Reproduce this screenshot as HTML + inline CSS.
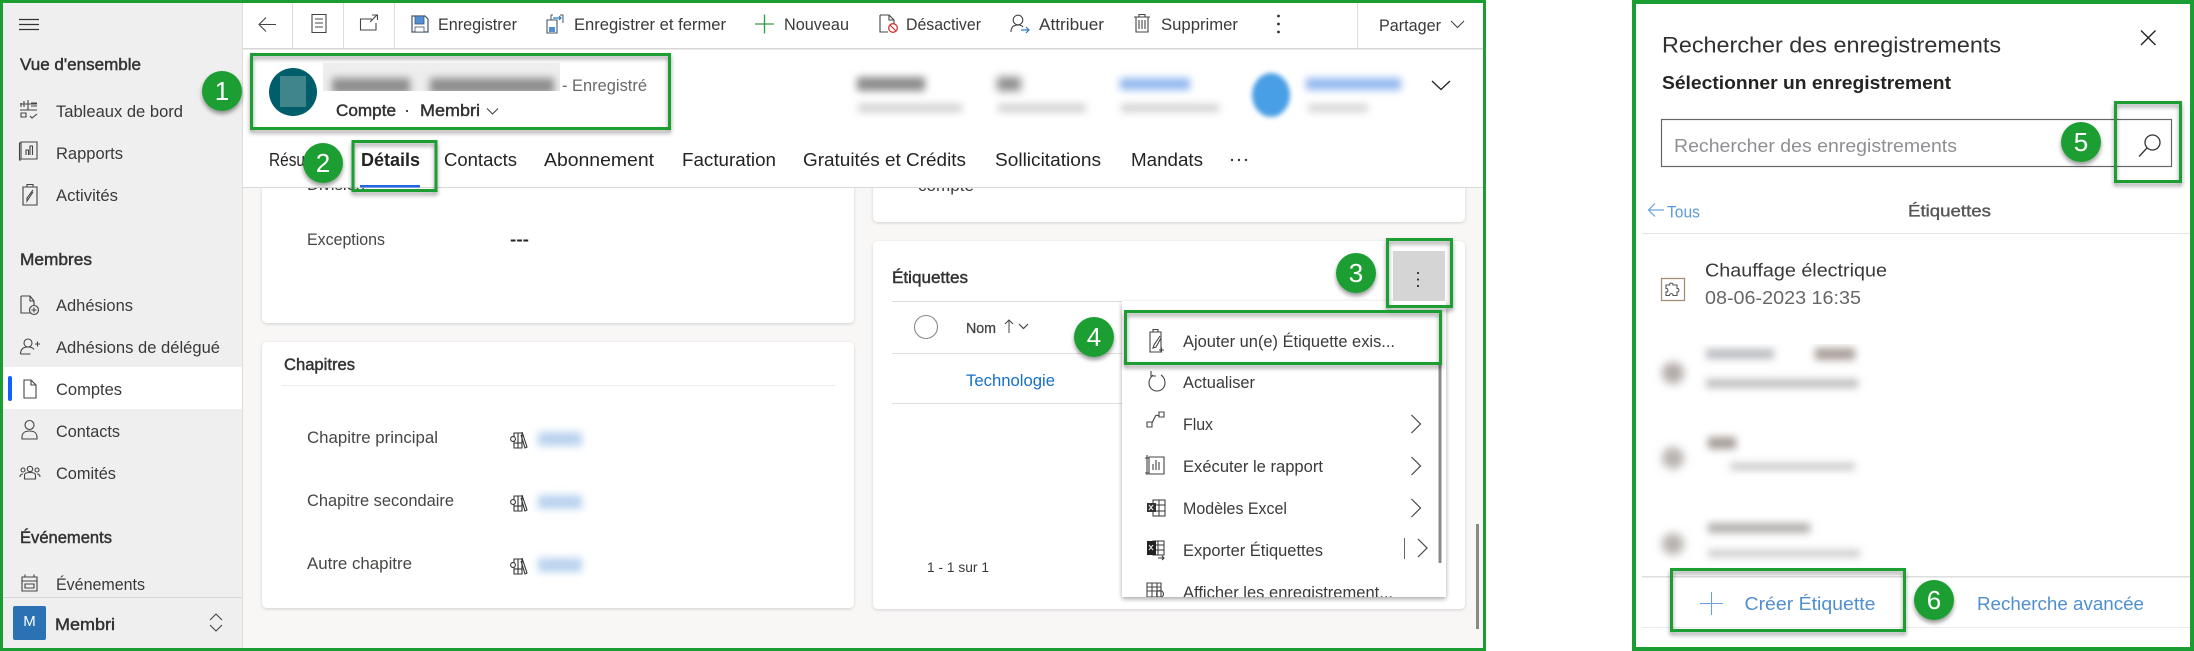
<!DOCTYPE html>
<html lang="fr"><head><meta charset="utf-8"><title>Étiquettes</title>
<style>
html,body{margin:0;padding:0;background:#fff;width:2194px;height:651px;overflow:hidden}
svg{display:block}
text{font-family:"Liberation Sans",sans-serif;fill:#3b3a39;font-size:16.5px}
.s{font-size:17px}
.b{font-weight:400;fill:#333;stroke:#333;stroke-width:.45px}
.bb{font-weight:700;fill:#252423}
.n{font-size:26px;fill:#fff;text-anchor:middle}
.t{font-size:18px;fill:#252423}
.m{font-size:17px;fill:#3b3a39}
.i{fill:none;stroke:#444;stroke-width:1.1}
.g{fill:none;stroke:#1b9e31;stroke-width:3;filter:url(#sh)}
.c{fill:#1b9e31;filter:url(#sh)}
.card{fill:#fff;filter:url(#cs)}
</style></head><body>
<svg width="2194" height="651" viewBox="0 0 2194 651" xmlns="http://www.w3.org/2000/svg">
<defs>
<filter id="sh" x="-20%" y="-20%" width="140%" height="150%"><feDropShadow dx="0" dy="3" stdDeviation="2" flood-color="#000" flood-opacity=".4"/></filter>
<filter id="cs" x="-5%" y="-5%" width="110%" height="110%"><feDropShadow dx="0" dy="1" stdDeviation="1.5" flood-color="#000" flood-opacity=".16"/></filter>
<filter id="ms" x="-5%" y="-5%" width="110%" height="110%"><feDropShadow dx="0" dy="2" stdDeviation="2.5" flood-color="#000" flood-opacity=".35"/></filter>
<filter id="b2" x="-50%" y="-50%" width="200%" height="200%"><feGaussianBlur stdDeviation="2.5"/></filter>
<filter id="b3" x="-60%" y="-300%" width="220%" height="700%"><feGaussianBlur stdDeviation="4"/></filter>
<filter id="b4" x="-100%" y="-100%" width="300%" height="300%"><feGaussianBlur stdDeviation="4.5"/></filter>
<clipPath id="mc"><rect x="1122" y="301" width="324" height="296"/></clipPath>
<clipPath id="hc"><rect x="323" y="63" width="237" height="28"/></clipPath>
<clipPath id="rc"><rect x="1640" y="344" width="250" height="223"/></clipPath>
<g id="lib" fill="none" stroke="#333" stroke-width="1.1"><path d="M4 3v15h4V3zM8 3h4v15H8zM12 2l5 15-2 1-4-13"/><circle cx="3" cy="9" r="2.4" fill="#fff"/><path d="M4 13h8"/></g>
<path id="rch" d="M0 0l9 9-9 9" fill="none" stroke="#444" stroke-width="1.2"/>
</defs>

<rect width="2194" height="651" fill="#fff"/>
<rect x="243" y="49" width="1241" height="600" fill="#f8f7f6"/>

<!-- cards -->
<rect class="card" x="262" y="170" width="592" height="153" rx="5"/>
<rect class="card" x="262" y="342" width="592" height="266" rx="5"/>
<rect class="card" x="873" y="170" width="592" height="52" rx="5"/>
<rect class="card" x="873" y="241" width="592" height="368" rx="5"/>

<text x="307" y="190" textLength="58" lengthAdjust="spacingAndGlyphs" class="s">Division</text>
<text x="510" y="190" class="bb" textLength="19" lengthAdjust="spacingAndGlyphs">---</text>
<text x="918" y="191" textLength="56" lengthAdjust="spacingAndGlyphs" class="s">compte</text>
<text x="307" y="245" textLength="78" lengthAdjust="spacingAndGlyphs" class="s" style="fill:#484644">Exceptions</text>
<text x="510" y="245" class="bb" textLength="19" lengthAdjust="spacingAndGlyphs">---</text>

<text x="284" y="370" class="b" textLength="71" lengthAdjust="spacingAndGlyphs">Chapitres</text>
<rect x="281" y="385" width="555" height="1" fill="#ececec"/>
<text x="307" y="443" textLength="131" lengthAdjust="spacingAndGlyphs" class="s" style="fill:#484644">Chapitre principal</text>
<text x="307" y="506" textLength="147" lengthAdjust="spacingAndGlyphs" class="s" style="fill:#484644">Chapitre secondaire</text>
<text x="307" y="569" textLength="105" lengthAdjust="spacingAndGlyphs" class="s" style="fill:#484644">Autre chapitre</text>
<use href="#lib" x="510" y="430"/><use href="#lib" x="510" y="493"/><use href="#lib" x="510" y="556"/>
<rect x="538" y="432" width="44" height="14" fill="#b9d3ef" filter="url(#b3)"/>
<rect x="538" y="495" width="44" height="14" fill="#b9d3ef" filter="url(#b3)"/>
<rect x="538" y="558" width="44" height="14" fill="#b9d3ef" filter="url(#b3)"/>

<text x="892" y="283" class="b" textLength="76" lengthAdjust="spacingAndGlyphs">Étiquettes</text>
<rect x="892" y="301" width="232" height="1" fill="#dcdcdc"/>
<circle cx="926" cy="327" r="11.5" fill="none" stroke="#8a8886" stroke-width="1.1"/>
<text x="966" y="333" textLength="30" lengthAdjust="spacingAndGlyphs" style="font-size:15px;fill:#444;stroke:#444;stroke-width:.3px">Nom</text>
<path d="M1009 333v-13M1005 324l4-4 4 4" fill="none" stroke="#444" stroke-width="1"/>
<path d="M1019 324l4.500 4.500 4.500-4.500" fill="none" stroke="#444" stroke-width="1.2"/>
<rect x="892" y="353" width="232" height="1" fill="#e1e1e1"/>
<text x="966" y="386" textLength="89" lengthAdjust="spacingAndGlyphs" class="s" style="fill:#1470c8">Technologie</text>
<rect x="892" y="403" width="232" height="1" fill="#e1e1e1"/>
<text x="927" y="572" textLength="62" lengthAdjust="spacingAndGlyphs" style="font-size:14px">1 - 1 sur 1</text>

<!-- header -->
<rect x="243" y="49" width="1241" height="138" fill="#fff"/>
<rect x="243" y="187" width="1241" height="1" fill="#d8d8d8"/>
<rect x="243" y="3" width="1241" height="45" fill="#fff"/>
<rect x="243" y="48" width="1241" height="1.5" fill="#d6d6d6"/>
<rect x="292" y="3" width="1" height="45" fill="#dcdcdc"/>
<rect x="343" y="3" width="1" height="45" fill="#dcdcdc"/>
<rect x="394" y="3" width="1" height="45" fill="#dcdcdc"/>
<rect x="1357" y="3" width="1" height="45" fill="#dcdcdc"/>

<!-- toolbar icons -->
<path class="i" d="M276 24.500h-16M266 17.500l-7 7 7 7" stroke-width="1.2"/>
<path class="i" d="M312 14.500h14v18h-14zM315 19h8M315 23h8M315 27h8"/>
<path class="i" d="M372 19h-11.500v11h15.500v-7M370 22l7-7M372 15h5.500v5"/>
<path d="M412 16h13l3 3v13h-16z" fill="#fff" stroke="#44546a" stroke-width="1.2"/>
<rect x="415" y="16" width="9" height="8" fill="#4f90d6" stroke="#44546a" stroke-width=".8"/>
<rect x="415" y="27" width="9" height="5" fill="#fff" stroke="#44546a" stroke-width=".8"/>
<path d="M547 20h10v13h-10z" fill="#fff" stroke="#44546a" stroke-width="1.1"/><rect x="549" y="27" width="6" height="5" fill="#4f90d6"/><path d="M553 15h-2v5M560 15h3v8" fill="none" stroke="#44546a"/><path d="M553 18h8M559 16l2 2-2 2" fill="none" stroke="#2f78c4" stroke-width="1.2"/>
<path d="M755 24h19M764.500 14.500v19" stroke="#2a9d3f" stroke-width="1.300" fill="none"/>
<path class="i" d="M880 15h9l5 5v4M880 15v17h8M889 15v5h5"/><circle cx="893" cy="28" r="4.300" fill="#fff" stroke="#d13438" stroke-width="1.300"/><path d="M890 25l6 6" stroke="#d13438" stroke-width="1.200"/>
<circle cx="1018" cy="20" r="4.800" class="i"/><path class="i" d="M1011 32c0-5 3-7 7-7 2 0 4 .6 5 2"/><path d="M1021 30h8M1026 27l3 3-3 3" fill="none" stroke="#2f78c4" stroke-width="1.200"/>
<path class="i" d="M1134 17h16M1139 17v-2.500h6v2.500M1136 17v15h12V17M1139 20v9M1142 20v9M1145 20v9"/>
<circle cx="1278.500" cy="16" r="1.400" fill="#333"/><circle cx="1278.500" cy="24" r="1.400" fill="#333"/><circle cx="1278.500" cy="32" r="1.400" fill="#333"/>
<path class="i" d="M1451 21l6.500 6.500 6.500-6.500"/>

<text x="438" y="30" textLength="79" lengthAdjust="spacingAndGlyphs">Enregistrer</text>
<text x="574" y="30" textLength="152" lengthAdjust="spacingAndGlyphs">Enregistrer et fermer</text>
<text x="784" y="30" textLength="65" lengthAdjust="spacingAndGlyphs">Nouveau</text>
<text x="906" y="30" textLength="75" lengthAdjust="spacingAndGlyphs">Désactiver</text>
<text x="1039" y="30" textLength="65" lengthAdjust="spacingAndGlyphs">Attribuer</text>
<text x="1161" y="30" textLength="77" lengthAdjust="spacingAndGlyphs">Supprimer</text>
<text x="1379" y="31" textLength="62" lengthAdjust="spacingAndGlyphs">Partager</text>

<!-- record header -->
<circle cx="293" cy="92" r="24" fill="#005e6b"/>
<rect x="280" y="76" width="26" height="31" fill="#3f858b"/>
<rect x="323" y="63" width="237" height="28" fill="#eeeeee"/>
<g clip-path="url(#hc)"><rect x="332" y="78" width="78" height="16" fill="#8e8e8e" filter="url(#b3)"/><rect x="430" y="78" width="124" height="16" fill="#8e8e8e" filter="url(#b3)"/></g>
<text x="562" y="91" textLength="85" lengthAdjust="spacingAndGlyphs" style="fill:#69696a">- Enregistré</text>
<text x="336" y="116" class="b" textLength="60" lengthAdjust="spacingAndGlyphs">Compte</text>
<circle cx="407" cy="111" r="1.100" fill="#333"/>
<text x="420" y="116" class="b" textLength="60" lengthAdjust="spacingAndGlyphs">Membri</text>
<path class="i" d="M487 108.500l5.500 5.500 5.500-5.500"/>

<!-- blurred header fields -->
<rect x="857" y="77" width="68" height="14" fill="#8c8c8c" filter="url(#b3)"/>
<rect x="858" y="104" width="104" height="8" fill="#cfcfcf" filter="url(#b3)"/>
<rect x="997" y="77" width="24" height="14" fill="#8c8c8c" filter="url(#b4)"/>
<rect x="998" y="104" width="88" height="8" fill="#cfcfcf" filter="url(#b3)"/>
<rect x="1120" y="78" width="70" height="12" fill="#93b8ef" filter="url(#b3)"/>
<rect x="1121" y="104" width="98" height="8" fill="#d0d0d0" filter="url(#b3)"/>
<ellipse cx="1271" cy="95" rx="19" ry="22" fill="#4a9fe5" filter="url(#b2)"/>
<rect x="1306" y="78" width="95" height="12" fill="#93b8ef" filter="url(#b3)"/>
<rect x="1308" y="104" width="60" height="8" fill="#d4d4d4" filter="url(#b3)"/>
<path d="M1432 81l9 8.500 9-8.500" fill="none" stroke="#222" stroke-width="1.300"/>

<!-- tabs -->
<text x="269" y="166" class="t" textLength="36" lengthAdjust="spacingAndGlyphs">Résu</text>
<text x="361" y="166" class="t" textLength="59" lengthAdjust="spacingAndGlyphs" style="font-weight:700">Détails</text>
<rect x="360" y="185" width="60" height="2.500" fill="#2266e3"/>
<text x="444" y="166" class="t" textLength="73" lengthAdjust="spacingAndGlyphs">Contacts</text>
<text x="544" y="166" class="t" textLength="110" lengthAdjust="spacingAndGlyphs">Abonnement</text>
<text x="682" y="166" class="t" textLength="94" lengthAdjust="spacingAndGlyphs">Facturation</text>
<text x="803" y="166" class="t" textLength="163" lengthAdjust="spacingAndGlyphs">Gratuités et Crédits</text>
<text x="995" y="166" class="t" textLength="106" lengthAdjust="spacingAndGlyphs">Sollicitations</text>
<text x="1131" y="166" class="t" textLength="72" lengthAdjust="spacingAndGlyphs">Mandats</text>
<circle cx="1232" cy="160" r="1.200" fill="#333"/><circle cx="1239" cy="160" r="1.200" fill="#333"/><circle cx="1246" cy="160" r="1.200" fill="#333"/>

<!-- page scrollbar -->
<rect x="1476" y="524" width="3" height="105" fill="#8a8a8a"/>

<!-- sidebar -->
<rect x="3" y="3" width="240" height="645" fill="#efefef"/>
<rect x="242" y="3" width="1" height="645" fill="#dcdcdc"/>
<path d="M19 19.500h20M19 24.500h20M19 29.500h20" stroke="#333" stroke-width="1.200" fill="none"/>
<text x="20" y="70" class="b" textLength="121" lengthAdjust="spacingAndGlyphs">Vue d'ensemble</text>
<text x="56" y="117" class="s" textLength="127" lengthAdjust="spacingAndGlyphs">Tableaux de bord</text>
<text x="56" y="159" class="s" textLength="67" lengthAdjust="spacingAndGlyphs">Rapports</text>
<text x="56" y="201" class="s" textLength="62" lengthAdjust="spacingAndGlyphs">Activités</text>
<text x="20" y="265" class="b" textLength="72" lengthAdjust="spacingAndGlyphs">Membres</text>
<text x="56" y="311" class="s" textLength="77" lengthAdjust="spacingAndGlyphs">Adhésions</text>
<text x="56" y="353" class="s" textLength="164" lengthAdjust="spacingAndGlyphs">Adhésions de délégué</text>
<rect x="3" y="367" width="239" height="42" fill="#fff"/>
<rect x="8" y="376" width="4" height="25" rx="2" fill="#0f62fe"/>
<text x="56" y="395" class="s" textLength="66" lengthAdjust="spacingAndGlyphs">Comptes</text>
<text x="56" y="437" class="s" textLength="64" lengthAdjust="spacingAndGlyphs">Contacts</text>
<text x="56" y="479" class="s" textLength="60" lengthAdjust="spacingAndGlyphs">Comités</text>
<text x="20" y="543" class="b" textLength="92" lengthAdjust="spacingAndGlyphs">Événements</text>
<text x="56" y="590" class="s" textLength="89" lengthAdjust="spacingAndGlyphs">Événements</text>
<!-- sidebar icons -->
<path class="i" d="M20 104h17M20 110h17M28 100v10M21 107v-4M24 107v-6M31 103h6M31 106h6M21 113h5v4h-5zM30 116l2 2 5-4"/>
<path class="i" d="M21 143h-1.500v17H21M21 142h16v17H21zM26 155v-5h2.500v5M30 155v-9h2.500v9"/>
<path class="i" d="M23 187h14v18H23zM27 187v-2.500h6v2.500M33 192l-6 9v-3l6-8"/>
<path class="i" d="M21 296h9l4 5v4M21 296v17h9M30 296v5h4"/><circle class="i" cx="34" cy="310" r="4.500"/><path class="i" d="M34 307.500v5M31.500 310h5"/>
<circle class="i" cx="28" cy="343" r="4"/><path class="i" d="M20.500 354c0-5 3-7 7.500-7 3 0 5 1 6 2.500M20.500 354h10M35 344h5M37.500 341.500v5"/>
<path class="i" d="M24 380h7l5 5v13H24zM31 380v5h5"/>
<circle class="i" cx="29.500" cy="425" r="4.500"/><path class="i" d="M22 439v-2c0-4 3-6 7.500-6s7.500 2 7.500 6v2z"/>
<circle class="i" cx="30" cy="469" r="2.700"/><circle class="i" cx="23" cy="470" r="2"/><circle class="i" cx="37" cy="470" r="2"/><path class="i" d="M24.500 479v-4c0-1.500 2-2.500 5.500-2.500s5.500 1 5.500 2.500v4zM20 477c0-2 1-3 3-3M40 477c0-2-1-3-3-3"/>
<path class="i" d="M22 577h15v14H22zM22 581h15M25 574.500v3M34 574.500v3M25 584h9v4h-9z"/>
<rect x="3" y="597" width="239" height="1" fill="#d6d6d6"/>
<rect x="13" y="606" width="33" height="34" rx="2" fill="#2b72b4"/>
<text x="29.500" y="626" style="font-size:15px;fill:#fff;text-anchor:middle">M</text>
<text x="55" y="630" class="b" textLength="60" lengthAdjust="spacingAndGlyphs">Membri</text>
<path class="i" d="M210 620l6-6 6 6M210 625l6 6 6-6"/>

<!-- menu -->
<rect x="1122" y="301" width="324" height="296" fill="#fff" filter="url(#ms)"/>
<g clip-path="url(#mc)">
<text class="m" x="1183" y="347" textLength="212" lengthAdjust="spacingAndGlyphs">Ajouter un(e) Étiquette exis...</text>
<text class="m" x="1183" y="388" textLength="72" lengthAdjust="spacingAndGlyphs">Actualiser</text>
<text class="m" x="1183" y="430" textLength="30" lengthAdjust="spacingAndGlyphs">Flux</text>
<text class="m" x="1183" y="472" textLength="140" lengthAdjust="spacingAndGlyphs">Exécuter le rapport</text>
<text class="m" x="1183" y="514" textLength="104" lengthAdjust="spacingAndGlyphs">Modèles Excel</text>
<text class="m" x="1183" y="556" textLength="140" lengthAdjust="spacingAndGlyphs">Exporter Étiquettes</text>
<text class="m" x="1183" y="598" textLength="210" lengthAdjust="spacingAndGlyphs">Afficher les enregistrement...</text>
<!-- menu icons -->
<path class="i" d="M1150 332h11v20h-11zM1153 332v-2.500h5v2.500M1160 336l-6 9-1 3 3-1 5-9M1159 350h5M1161.500 347.500v5"/>
<path class="i" d="M1161 375c3 2 4 5 4 8 0 5-4 8-8 8s-8-3-8-8c0-4 2-6 4-8M1151 371v5h5"/>
<path class="i" d="M1147 422h5v5h-5zM1159 417h5v-5h-5zM1152 423l3-6c.5-2 2-2 4-1"/>
<path class="i" d="M1149 457h15v17h-15zM1147 455v20M1145 458h4M1145 473h4M1153 470v-6M1156 470v-10M1159 470v-8"/>
<path d="M1153 500h12v16h-12z" fill="#fff" stroke="#333"/><path d="M1153 505h12M1153 511h12M1159 500v16" stroke="#333" fill="none"/><rect x="1147" y="503" width="9" height="9" fill="#333"/><path d="M1149 505l4 5M1153 505l-4 5" stroke="#fff" fill="none"/>
<path d="M1153 541h11v14h-11z" fill="#fff" stroke="#333"/><path d="M1153 545h11M1153 550h11M1158 541v14" stroke="#333" fill="none"/><rect x="1147" y="541" width="9" height="14" fill="#222"/><path d="M1149 545l4 5M1153 545l-4 5" stroke="#fff" fill="none"/><path d="M1158 558h6M1162 556l2 2-2 2" stroke="#333" fill="none"/>
<path class="i" d="M1147 583h14v14h-14zM1147 587h14M1147 591h14M1152 583v14M1157 583v14"/><circle class="i" cx="1160" cy="594" r="3.500"/>
<use href="#rch" x="1411.500" y="415"/><use href="#rch" x="1411.500" y="457"/><use href="#rch" x="1411.500" y="499"/>
<rect x="1404" y="538" width="1" height="21" fill="#666"/>
<use href="#rch" x="1418" y="539"/>
<rect x="1438.500" y="365" width="3" height="198" fill="#8a8a8a"/>
</g>

<!-- grey button -->
<rect x="1393" y="251" width="52" height="50" fill="#d5d5d5"/>
<circle cx="1418" cy="273" r="1.100" fill="#333"/><circle cx="1418" cy="279.500" r="1.100" fill="#333"/><circle cx="1418" cy="286" r="1.100" fill="#333"/>

<!-- left frame -->
<rect x="1.500" y="1.500" width="1483" height="648" fill="none" stroke="#1b9e31" stroke-width="3"/>

<!-- callouts left -->
<rect class="g" x="251.500" y="54.500" width="418" height="74"/>
<rect class="g" x="353" y="141.500" width="83" height="49"/>
<rect class="g" x="1387.500" y="239.500" width="64" height="67"/>
<rect class="g" x="1125.500" y="311.500" width="315" height="52"/>
<circle class="c" cx="222" cy="91" r="20"/><text x="222" y="100" class="n">1</text>
<circle class="c" cx="323" cy="163" r="20"/><text x="323" y="172" class="n">2</text>
<circle class="c" cx="1356" cy="273" r="20"/><text x="1356" y="282" class="n">3</text>
<circle class="c" cx="1094" cy="337" r="20"/><text x="1094" y="346" class="n">4</text>

<!-- right panel -->
<rect x="1634" y="2" width="558" height="647" fill="#fff" stroke="#1b9e31" stroke-width="4"/>
<text x="1662" y="52.500" textLength="339" lengthAdjust="spacingAndGlyphs" style="font-size:22.500px;fill:#323130">Rechercher des enregistrements</text>
<text x="1662" y="89" class="bb" textLength="289" lengthAdjust="spacingAndGlyphs" style="font-size:18px">Sélectionner un enregistrement</text>
<path d="M2141 30.500l14.500 14.500M2155.500 30.500L2141 45" stroke="#222" stroke-width="1.400" fill="none"/>
<rect x="1661.500" y="119.500" width="510" height="47" fill="#fff" stroke="#666" stroke-width="1.200"/>
<text x="1674" y="152" textLength="283" lengthAdjust="spacingAndGlyphs" style="font-size:18.500px;fill:#8f8f93">Rechercher des enregistrements</text>
<circle cx="2152.500" cy="142.500" r="7.500" fill="none" stroke="#333" stroke-width="1.300"/>
<path d="M2147 148l-8 8.500" stroke="#333" stroke-width="1.300" fill="none"/>
<path d="M1664 210h-15M1655 203.500l-6.500 6.500 6.500 6.500" stroke="#6aa5e0" stroke-width="1.200" fill="none"/>
<text x="1667" y="217.500" textLength="33" lengthAdjust="spacingAndGlyphs" style="font-size:16.500px;fill:#5b9bd9">Tous</text>
<text x="1908" y="216.500" textLength="83" lengthAdjust="spacingAndGlyphs" style="font-size:16.500px;fill:#555;stroke:#555;stroke-width:.35px">Étiquettes</text>
<rect x="1642" y="233" width="548" height="1" fill="#e3e3e3"/>
<text x="1705" y="276.500" textLength="182" lengthAdjust="spacingAndGlyphs" style="font-size:18.500px;fill:#3b3a39">Chauffage électrique</text>
<text x="1705" y="304" textLength="156" lengthAdjust="spacingAndGlyphs" style="font-size:18.500px;fill:#666">08-06-2023 16:35</text>
<rect x="1661.500" y="278.500" width="23" height="22" fill="#fff" stroke="#a58e78" stroke-width="1.300"/>
<path d="M1666 285h3.500c-.8-2.500 4-2.500 3.500 0h4v3.500c2.500-.6 2.500 4 0 3.500v3.500h-4c.6-2.500-3.500-2.500-3.500 0H1666v-3.500c2.500.6 2.500-4 0-3.500z" fill="none" stroke="#555" stroke-width="1.100"/>
<g clip-path="url(#rc)">
<circle cx="1673" cy="373" r="11" fill="#b3aca8" filter="url(#b4)"/>
<rect x="1706" y="349" width="68" height="10" fill="#b9bbc0" filter="url(#b3)"/><rect x="1815" y="348" width="40" height="12" fill="#a89f9a" filter="url(#b3)"/><rect x="1706" y="379" width="152" height="9" fill="#bdbdbd" filter="url(#b3)"/>
<circle cx="1673" cy="458" r="11" fill="#b8b3af" filter="url(#b4)"/>
<rect x="1708" y="437" width="28" height="12" fill="#a59d98" filter="url(#b3)"/><rect x="1730" y="463" width="125" height="7" fill="#c6c6c6" filter="url(#b3)"/>
<circle cx="1673" cy="544" r="11" fill="#b8b3af" filter="url(#b4)"/>
<rect x="1708" y="523" width="102" height="10" fill="#b3afac" filter="url(#b3)"/><rect x="1708" y="550" width="152" height="7" fill="#c8c8c8" filter="url(#b3)"/>
</g>
<rect x="1642" y="576" width="548" height="1.500" fill="#dedede"/>
<rect x="1642" y="627" width="548" height="1" fill="#ececec"/>
<path d="M1700 603.500h23M1711.500 592v23" stroke="#6a9fd8" stroke-width="1.100" fill="none"/>
<text x="1744.500" y="610" textLength="131" lengthAdjust="spacingAndGlyphs" style="font-size:18.500px;fill:#4f8fd0">Créer Étiquette</text>
<text x="1977" y="610" textLength="167" lengthAdjust="spacingAndGlyphs" style="font-size:18.500px;fill:#4f8fd0">Recherche avancée</text>
<rect class="g" x="2115.500" y="102.500" width="65" height="79"/>
<rect class="g" x="1671.500" y="569.500" width="233" height="61"/>
<circle class="c" cx="2081" cy="142" r="20"/><text x="2081" y="151" class="n">5</text>
<circle class="c" cx="1934" cy="600" r="20"/><text x="1934" y="609" class="n">6</text>
</svg>
</body></html>
